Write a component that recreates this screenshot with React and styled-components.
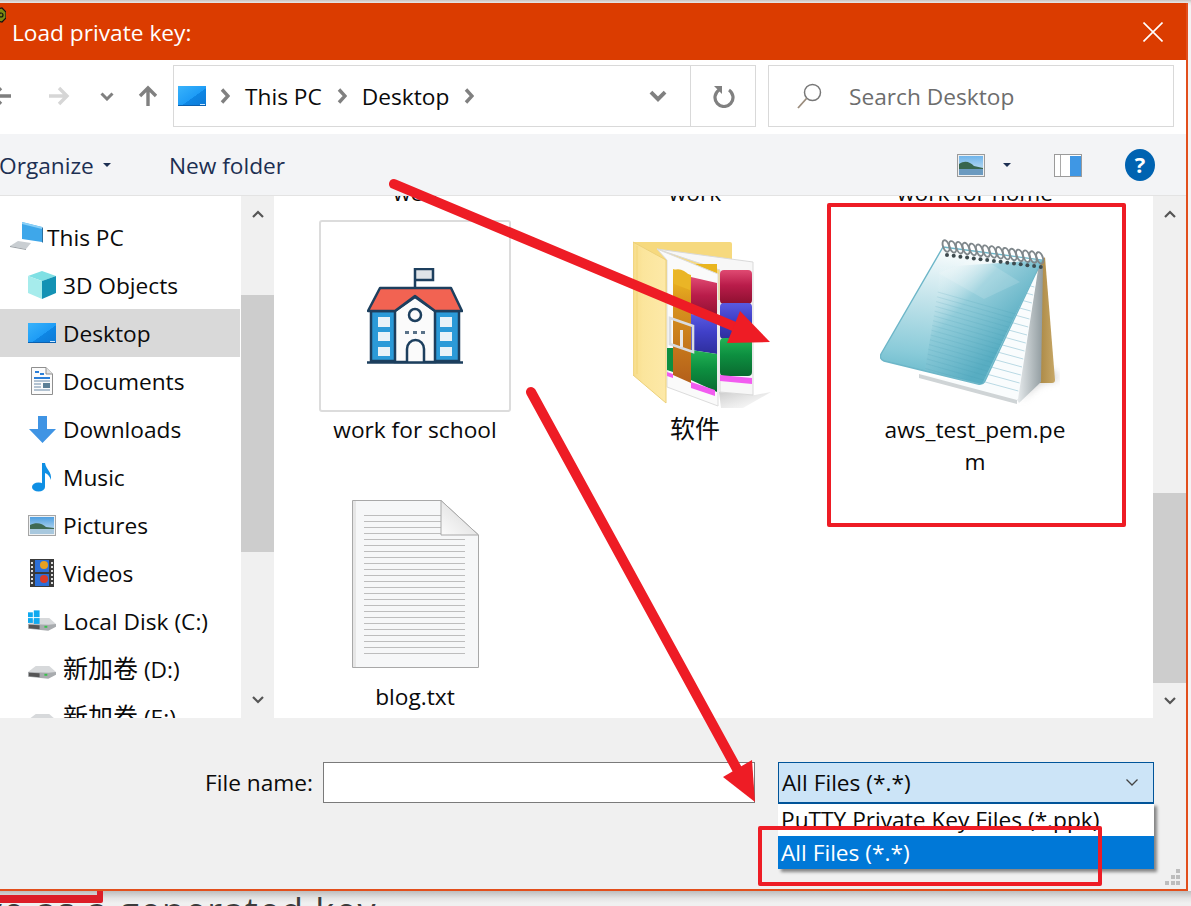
import React from "react";
import styled, { createGlobalStyle } from "styled-components";

const UI_FONT = `"Open Sans", "Noto Sans", "Noto Sans CJK SC", sans-serif`;

const GlobalStyle = createGlobalStyle`
  html, body { margin: 0; padding: 0; background: #f3f3f3; }
  * { box-sizing: border-box; }
`;

const Page = styled.div`
  position: relative;
  width: 1191px;
  height: 906px;
  overflow: hidden;
  font-family: ${UI_FONT};
  font-size: 22.7px;
  color: #0a0a0a;
  background: linear-gradient(#c9c5c2 0, #e9e7e5 3px, #f4f4f4 6px);
`;

const Window = styled.div`
  width: 1188px;
  height: 888px;
  margin-top: 3px;
  display: flex;
  flex-direction: column;
  border-right: 2px solid #e24f1c;
  border-bottom: 2px solid #e24f1c;
  background: #fff;
  position: relative;
  z-index: 1;
`;

const TitleBar = styled.div`
  height: 57px;
  flex: none;
  background: #db3c00;
  color: #fff;
  display: flex;
  align-items: center;
  padding: 1px 23px 0 0;
`;

const TitleText = styled.span`
  margin-left: 6px;
  flex: 1;
`;

const NavBar = styled.div`
  height: 74px;
  flex: none;
  display: flex;
  align-items: center;
  padding-bottom: 2px;
`;

const NavSlot = styled.div`
  flex: none;
  width: ${(p) => p.$w}px;
  margin-left: ${(p) => p.$ml || 0}px;
  display: flex;
  align-items: center;
  justify-content: center;
`;

const AddressBox = styled.div`
  margin-left: 13px;
  width: 583px;
  height: 62px;
  flex: none;
  display: flex;
  align-items: center;
  border: 1px solid #d9d9d9;
  padding-left: 4px;
`;

const Crumb = styled.span`
  margin: 0 15px;
  white-space: nowrap;
`;

const AddressEnd = styled.div`
  margin-left: auto;
  width: 65px;
  height: 100%;
  flex: none;
  display: flex;
  align-items: center;
  justify-content: center;
  border-left: 1px solid #d9d9d9;
`;

const SearchBox = styled.div`
  margin-left: 12px;
  width: 406px;
  height: 62px;
  flex: none;
  display: flex;
  align-items: center;
  border: 1px solid #d9d9d9;
  padding-left: 28px;
  color: #6d6d6d;
`;

const SearchText = styled.span`
  margin-left: 27px;
`;

const CommandBar = styled.div`
  height: 62px;
  flex: none;
  display: flex;
  align-items: center;
  padding-top: 1px;
  background: #f3f4f6;
  border-bottom: 1px solid #e3e3e3;
  color: #1c2f52;
`;

const CommandLabel = styled.span`
  margin-left: ${(p) => p.$ml || 0}px;
  white-space: nowrap;
`;

const Caret = styled.span`
  flex: none;
  width: 0;
  height: 0;
  margin-left: ${(p) => p.$ml}px;
  border-left: 4px solid transparent;
  border-right: 4px solid transparent;
  border-top: 4px solid #1c2f52;
`;

const CommandIcon = styled.div`
  flex: none;
  display: flex;
  margin-left: ${(p) => p.$ml}px;
`;

const Main = styled.div`
  flex: 1;
  min-height: 0;
  display: flex;
`;

const Sidebar = styled.div`
  width: 241px;
  flex: none;
  overflow: hidden;
  padding-top: 17px;
`;

const TreeRow = styled.div`
  height: 48px;
  width: 240px;
  display: flex;
  align-items: center;
  white-space: nowrap;
  padding-left: ${(p) => p.$indent}px;
  background: ${(p) => (p.$selected ? "#d9d9d9" : "transparent")};
`;

const TreeIcon = styled.span`
  flex: none;
  width: ${(p) => p.$w || 28}px;
  height: 32px;
  margin-right: ${(p) => p.$mr || 7}px;
  display: flex;
  align-items: center;
  justify-content: center;
`;

const Cjk = styled.span`
  font-family: "Noto Sans CJK SC", sans-serif;
  font-size: 25px;
  line-height: 1;
`;

const Scrollbar = styled.div`
  width: 33px;
  flex: none;
  display: flex;
  flex-direction: column;
  background: #f0f0f0;
`;

const ScrollArrow = styled.div`
  height: 36px;
  flex: none;
  display: flex;
  align-items: center;
  justify-content: center;
`;

const ScrollTrack = styled.div`
  flex: 1;
  padding-top: ${(p) => p.$top}px;
`;

const ScrollThumb = styled.div`
  height: ${(p) => p.$h}px;
  background: #cdcdcd;
`;

const FilePane = styled.div`
  flex: 1;
  min-width: 0;
  margin-left: 1px;
  overflow: hidden;
`;

const FileGrid = styled.div`
  display: grid;
  grid-template-columns: repeat(3, 280px);
  grid-template-rows: 24px 267px auto;
`;

const ClippedLabel = styled.div`
  height: 32px;
  margin-top: -19px;
  line-height: 32px;
  text-align: center;
`;

const FileItem = styled.div`
  display: flex;
  flex-direction: column;
  align-items: center;
`;

const Thumb = styled.div`
  width: 192px;
  height: 192px;
  flex: none;
  display: flex;
  align-items: center;
  justify-content: center;
  padding: ${(p) => p.$pad || 0};
  border: ${(p) => (p.$framed ? "2px solid #dcdcdc" : "none")};
  border-radius: 3px;
`;

const FileLabel = styled.div`
  width: 190px;
  margin-top: 2px;
  line-height: 32px;
  text-align: center;
  overflow-wrap: anywhere;
`;

const Footer = styled.div`
  height: 171px;
  flex: none;
  position: relative;
  background: #f0f0f0;
  display: flex;
  align-items: flex-start;
  padding: 44px 0 0 205px;
`;

const FieldLabel = styled.span`
  width: 118px;
  height: 41px;
  flex: none;
  line-height: 41px;
  white-space: nowrap;
`;

const NameInput = styled.div`
  width: 432px;
  height: 41px;
  flex: none;
  background: #fff;
  border: 1px solid #7a7a7a;
`;

const TypeSelect = styled.div`
  position: relative;
  margin-left: 23px;
  width: 376px;
  height: 41px;
  flex: none;
  display: flex;
  align-items: center;
  justify-content: space-between;
  padding: 0 14px 0 3px;
  background: #cce4f7;
  border: 1px solid #005499;
`;

const TypeMenu = styled.div`
  position: absolute;
  top: 40px;
  left: -1px;
  width: 376px;
  background: #fff;
  border-top: 1px solid #005499;
  box-shadow: 3px 3px 3px rgba(0, 0, 0, 0.45);
`;

const TypeOption = styled.div`
  height: ${(p) => p.$h}px;
  padding-left: 3px;
  line-height: ${(p) => p.$h}px;
  white-space: nowrap;
  color: ${(p) => (p.$active ? "#fff" : "#0a0a0a")};
  background: ${(p) => (p.$active ? "#0078d7" : "#fff")};
`;

const Grip = styled.svg`
  position: absolute;
  right: 5px;
  bottom: 4px;
`;

const Backdrop = styled.div`
  position: relative;
  height: 15px;
  overflow: hidden;
  background: linear-gradient(#bdbdbd 0, #e3e3e3 7px, #f0f0f0 12px);
`;

const BackdropText = styled.div`
  position: absolute;
  right: 814px;
  top: 0;
  font-size: 36px;
  line-height: 40px;
  letter-spacing: 1.5px;
  color: #3c3c3c;
  white-space: nowrap;
`;

const RedMark = styled.div`
  position: absolute;
  left: -10px;
  top: -2px;
  width: 113px;
  height: 14px;
  border-right: 6px solid #dc1d27;
  border-bottom: 8px solid #dc1d27;
  border-radius: 2px;
`;

const Overlay = styled.svg`
  position: absolute;
  left: 0;
  top: 0;
  z-index: 2;
  pointer-events: none;
`;

const Chevron = ({ color = "#808080", w = 10, h = 16 }) => (
  <svg width={w} height={h} viewBox="0 0 10 16">
    <path d="M2 1.5 L8 8 L2 14.5" fill="none" stroke={color} strokeWidth="3.4" />
  </svg>
);

const ChevronDown = ({ color = "#808080", w = 14, h = 9, sw = 3 }) => (
  <svg width={w} height={h} viewBox="0 0 14 9">
    <path d="M1.5 1.5 L7 7 L12.5 1.5" fill="none" stroke={color} strokeWidth={sw} />
  </svg>
);

const ScrollChevron = ({ up }) => (
  <svg width="12" height="8" viewBox="0 0 12 8">
    <path d={up ? "M1 7 L6 2 L11 7" : "M1 1 L6 6 L11 1"} fill="none" stroke="#555" strokeWidth="2.2" />
  </svg>
);

const PuttyIcon = () => (
  <svg width="6" height="16" viewBox="0 0 6 16" style={{ flex: "none", marginTop: -34 }}>
    <path d="M-3 2 L2 1 L6 5 L6 11 L2 15 L-3 14 Z" fill="#7c8a12" stroke="#111" strokeWidth="1.2" />
    <circle cx="1" cy="8" r="2" fill="none" stroke="#111" strokeWidth="1.2" />
  </svg>
);

const ArrowIcon = ({ color, size = 22, flip, up }) => (
  <svg
    width={size}
    height={size}
    viewBox="0 0 22 22"
    style={{ transform: up ? "rotate(-90deg)" : flip ? "scaleX(-1)" : "none" }}
  >
    <path d="M1 11 H19 M11 3 L19 11 L11 19" fill="none" stroke={color} strokeWidth="3.4" />
  </svg>
);

const DesktopIcon = ({ w = 28, h = 20 }) => (
  <svg width={w} height={h} viewBox="0 0 28 20">
    <defs>
      <linearGradient id="desk" x1="0" y1="0" x2="1" y2="1">
        <stop offset="0" stopColor="#39b3fb" />
        <stop offset="0.55" stopColor="#1e9cf6" />
        <stop offset="0.56" stopColor="#0e86e4" />
        <stop offset="1" stopColor="#0d7ad6" />
      </linearGradient>
    </defs>
    <rect x="0" y="0" width="28" height="20" fill="url(#desk)" />
    <rect x="0" y="19" width="28" height="1" fill="#0b5fae" />
    <rect x="22" y="18" width="5" height="1" fill="#cfeaff" />
  </svg>
);

const RefreshIcon = () => (
  <svg width="24" height="24" viewBox="0 0 24 24">
    <path d="M8 6 A9 9 0 1 0 18 6" fill="none" stroke="#808080" strokeWidth="3.2" />
    <path d="M3 2 H11 V10 Z" fill="#808080" />
  </svg>
);

const SearchIcon = () => (
  <svg width="25" height="26" viewBox="0 0 25 26">
    <circle cx="15.5" cy="9.5" r="8" fill="none" stroke="#777" strokeWidth="1.5" />
    <path d="M9.5 15.5 L1 25" stroke="#9a8c7c" strokeWidth="1.8" />
  </svg>
);

const ViewIcon = () => (
  <svg width="28" height="23" viewBox="0 0 28 23">
    <defs>
      <linearGradient id="viewSky" x1="0" y1="0" x2="0" y2="1">
        <stop offset="0" stopColor="#6fb4ea" />
        <stop offset="1" stopColor="#d5e8f4" />
      </linearGradient>
    </defs>
    <rect x="0.5" y="0.5" width="27" height="22" fill="#eef0f2" stroke="#9a9a9a" />
    <rect x="2" y="2" width="24" height="19" fill="url(#viewSky)" />
    <path d="M2 10 C8 6 13 8 17 12 L26 14 V15 H2 Z" fill="#38664e" />
    <rect x="2" y="15" width="24" height="6" fill="#6b9ac0" />
  </svg>
);

const PreviewIcon = () => (
  <svg width="28" height="23" viewBox="0 0 28 23">
    <rect x="0.5" y="0.5" width="27" height="22" fill="#fff" stroke="#9a9a9a" />
    <rect x="6" y="1" width="1" height="21" fill="#a8a8a8" />
    <rect x="16" y="2" width="11" height="20" fill="#3f97e4" />
  </svg>
);

const HelpIcon = () => (
  <svg width="30" height="32" viewBox="0 0 30 32">
    <ellipse cx="15" cy="16" rx="15" ry="16" fill="#0063b1" />
    <text x="15" y="24" textAnchor="middle" fill="#fff" fontSize="22" fontWeight="700" fontFamily="Open Sans">?</text>
  </svg>
);

const ThisPcIcon = () => (
  <svg width="34" height="30" viewBox="0 0 34 30">
    <path d="M12 0 L32 5 V20 L12 17 Z" fill="#3ea7ea" />
    <path d="M12 0 L32 5 L32 7 L12 2 Z" fill="#8bd0f7" />
    <path d="M32 5 L33 6 V21 L32 20 Z" fill="#2c6f9e" />
    <path d="M8 19 L21 21 L16 27 L0 24 Z" fill="#c9ced2" />
    <path d="M0 24 L16 27 V28 L0 25 Z" fill="#9aa0a5" />
  </svg>
);

const CubeIcon = () => (
  <svg width="28" height="28" viewBox="0 0 28 28">
    <path d="M14 0 L28 5 L14 10 L0 5 Z" fill="#7fe0e4" />
    <path d="M0 5 L14 10 V28 L0 22 Z" fill="#a6ecec" />
    <path d="M28 5 L14 10 V28 L28 22 Z" fill="#1492b4" />
  </svg>
);

const DocumentsIcon = () => (
  <svg width="22" height="28" viewBox="0 0 22 28">
    <path d="M0.5 0.5 H15 L21.5 7 V27.5 H0.5 Z" fill="#fbfbfb" stroke="#8f8f8f" />
    <path d="M15 0.5 V7 H21.5" fill="#e3e3e3" stroke="#8f8f8f" />
    <path d="M4 5 H8 M9 7 H13 M3 11 H19" stroke="#2b7fd8" strokeWidth="2" />
    <path d="M3 14 H19 M3 17 H10 M3 20 H10 M3 23 H19" stroke="#6b8aa8" strokeWidth="1" />
    <rect x="12" y="16" width="7" height="5" fill="#5c7f96" />
  </svg>
);

const DownloadsIcon = () => (
  <svg width="27" height="27" viewBox="0 0 27 27">
    <path d="M9 0 H18 V13 H27 L13.5 27 L0 13 H9 Z" fill="#3f94e4" />
  </svg>
);

const MusicIcon = () => (
  <svg width="20" height="29" viewBox="0 0 20 29">
    <ellipse cx="6.5" cy="24" rx="6.5" ry="4.6" fill="#0f8fe4" />
    <path d="M10 0 H13 C14 7 20 8 19 17 C18 14 16 11 13 10 V24 H10 Z" fill="#0f8fe4" />
  </svg>
);

const PicturesIcon = () => (
  <svg width="28" height="21" viewBox="0 0 28 21">
    <defs>
      <linearGradient id="picSky" x1="0" y1="0" x2="0" y2="1">
        <stop offset="0" stopColor="#4f9fe0" />
        <stop offset="1" stopColor="#d5e8f4" />
      </linearGradient>
    </defs>
    <rect x="0.5" y="0.5" width="27" height="20" fill="#eef1f3" stroke="#a5a5a5" />
    <rect x="2" y="2" width="24" height="17" fill="url(#picSky)" />
    <path d="M2 10 C8 7 14 8 18 12 L26 13 V15 H2 Z" fill="#3f6a54" />
    <rect x="2" y="14" width="24" height="5" fill="#a8c8de" />
  </svg>
);

const VideosIcon = () => (
  <svg width="24" height="28" viewBox="0 0 24 28">
    <rect x="0" y="0" width="24" height="28" fill="#3a3a3a" />
    <rect x="5" y="1" width="14" height="12" fill="#2c6fd8" />
    <rect x="5" y="15" width="14" height="12" fill="#2c6fd8" />
    <circle cx="14" cy="6" r="4" fill="#e8a020" />
    <circle cx="14" cy="20" r="4" fill="#d93a2a" />
    <path d="M2 3 V26" stroke="#ddd" strokeWidth="2" strokeDasharray="2 2" />
    <path d="M22 3 V26" stroke="#ddd" strokeWidth="2" strokeDasharray="2 2" />
  </svg>
);

const DriveIcon = ({ windows }) => (
  <svg width="29" height="22" viewBox="0 0 29 22">
    <path d="M0 14 L8 8 H22 L29 14 L21 18 H3 Z" fill="#d7d9db" />
    <path d="M0 14 L21 15 L29 14 V17 L21 21 L0 19 Z" fill="#a8abae" />
    <path d="M1 15 L12 15.5 V19.5 L1 18.5 Z" fill="#555" />
    <rect x="17" y="16" width="3" height="2" fill="#37c24a" />
    {windows && (
      <g fill="#10a9ef">
        <rect x="0" y="2" width="5" height="5" />
        <rect x="6" y="0" width="6" height="7" />
        <rect x="0" y="8" width="5" height="5" />
        <rect x="6" y="8" width="6" height="6" />
      </g>
    )}
  </svg>
);

const SchoolIcon = () => (
  <svg width="96" height="96" viewBox="0 0 96 96" fill="none">
    <path d="M48 20 V1 H66 V12 H48" fill="#e0e4e8" stroke="#1d3f5e" strokeWidth="2.5" />
    <rect x="4" y="43" width="88" height="50" fill="#2b9ad8" stroke="#1d3f5e" strokeWidth="2.5" />
    <path d="M28 94 V43 L48 29 L68 43 V94 Z" fill="#fbfbfb" stroke="#1d3f5e" strokeWidth="2.5" />
    <path d="M13 20 H84 L95 43 H68 L48 28 L28 43 H1 Z" fill="#f26352" stroke="#1d3f5e" strokeWidth="2.5" strokeLinejoin="round" />
    <circle cx="48" cy="47" r="6" fill="#fbfbfb" stroke="#1d3f5e" strokeWidth="2.5" />
    <g fill="#5a7288">
      <rect x="38" y="63" width="4" height="3" />
      <rect x="46" y="63" width="4" height="3" />
      <rect x="54" y="63" width="4" height="3" />
    </g>
    <path d="M40 94 V81 A8.5 9 0 0 1 57 81 V94" fill="#fbfbfb" stroke="#1d3f5e" strokeWidth="2.5" />
    <g fill="#e8f2f8">
      <rect x="11" y="49" width="12" height="10" />
      <rect x="11" y="64" width="12" height="9" />
      <rect x="11" y="79" width="12" height="9" />
      <rect x="73" y="49" width="12" height="10" />
      <rect x="73" y="64" width="12" height="9" />
      <rect x="73" y="79" width="12" height="9" />
    </g>
    <path d="M0 94.5 H96" stroke="#1d3f5e" strokeWidth="2.5" />
  </svg>
);

const rollGradient = (id, light, mid, dark) => (
  <linearGradient id={id} x1="0" y1="0" x2="0" y2="1">
    <stop offset="0" stopColor={light} />
    <stop offset="0.45" stopColor={mid} />
    <stop offset="1" stopColor={dark} />
  </linearGradient>
);

const RarFolderIcon = () => (
  <svg width="140" height="170" viewBox="0 0 140 170">
    <defs>
      <linearGradient id="flap" x1="0" y1="0" x2="1" y2="0">
        <stop offset="0" stopColor="#f7dc8a" />
        <stop offset="0.3" stopColor="#fbe59c" />
        <stop offset="1" stopColor="#fde9a8" />
      </linearGradient>
      <linearGradient id="shade" x1="0" y1="0" x2="1" y2="1">
        <stop offset="0" stopColor="#9a9a9a" stopOpacity="0.5" />
        <stop offset="1" stopColor="#bbb" stopOpacity="0" />
      </linearGradient>
      <linearGradient id="belt" x1="0" y1="0" x2="0" y2="1">
        <stop offset="0" stopColor="#f0c020" />
        <stop offset="0.3" stopColor="#d9941e" />
        <stop offset="1" stopColor="#b45f1a" />
      </linearGradient>
      {rollGradient("rollRed", "#e04a72", "#b91c4a", "#8e1030")}
      {rollGradient("rollBlue", "#5a5ae0", "#4040c8", "#2e2e9c")}
      {rollGradient("rollGreen", "#22b355", "#0d8f40", "#0a6a30")}
    </defs>
    <path d="M86 152 L122 155 L138 152 L110 168 L88 168 Z" fill="url(#shade)" />
    <path d="M0 2 H97 Q99 2 99 4 V60 H0 Z" fill="#f6d97e" />
    <path d="M24 9 L120 22 V155 L87 152 V30 Z" fill="#f7f7f7" stroke="#d9d9d9" />
    <rect x="87" y="30" width="32" height="34" rx="4" fill="url(#rollRed)" />
    <rect x="87" y="63" width="32" height="36" rx="4" fill="url(#rollBlue)" />
    <rect x="87" y="98" width="32" height="38" rx="4" fill="url(#rollGreen)" />
    <rect x="60" y="24" width="24" height="9" fill="#e9b51f" />
    <path d="M87 135 L119 138 V144 L87 141 Z" fill="#f25cf0" />
    <path d="M24 9 L85 34 V166 L34 147 V20 Z" fill="#fafafa" stroke="#dcdcdc" />
    <path d="M58 37 L84 43 V78 L58 74 Z" fill="url(#rollRed)" />
    <path d="M58 74 L84 78 V114 L58 110 Z" fill="url(#rollBlue)" />
    <path d="M58 110 L84 114 V152 L58 140 Z" fill="url(#rollGreen)" />
    <path d="M34 108 L40 108 V132 L34 130 Z" fill="#0d8f40" />
    <path d="M40 29 L58 35 V143 L40 135 Z" fill="url(#belt)" />
    <path d="M41 30 Q49 27 57 36 V50 L41 44 Z" fill="#eab526" />
    <path d="M37 78 L60 86 V112 L37 104 Z" fill="none" stroke="#d9dce0" strokeWidth="2.6" />
    <rect x="47" y="90" width="3" height="17" fill="#e8e8e8" />
    <path d="M34 132 L40 134 V138 L34 136 Z" fill="#f25cf0" />
    <path d="M58 142 L82 150 V156 L58 148 Z" fill="#f25cf0" />
    <path d="M0 2 L33 20 V163 L0 135 Z" fill="url(#flap)" stroke="#ecd07a" strokeWidth="1" />
    <path d="M4 6 V134" stroke="#f3d67a" strokeWidth="1" />
  </svg>
);

const spiralRings = Array.from({ length: 15 }, (_, i) => i);
const coverLines = Array.from({ length: 22 }, (_, i) => i);
const pageLines = Array.from({ length: 14 }, (_, i) => i);

const NotepadIcon = () => (
  <svg width="180" height="172" viewBox="0 0 180 172">
    <defs>
      <linearGradient id="coverBase" x1="0.55" y1="0" x2="0.4" y2="1">
        <stop offset="0" stopColor="#ffffff" />
        <stop offset="0.4" stopColor="#c4e4eb" />
        <stop offset="0.8" stopColor="#8acbd9" />
        <stop offset="1" stopColor="#66b8ca" />
      </linearGradient>
      <linearGradient id="coverPanel" x1="0.1" y1="0.05" x2="0.7" y2="0.65">
        <stop offset="0" stopColor="#ffffff" stopOpacity="0" />
        <stop offset="0.45" stopColor="#8ccad8" stopOpacity="0.85" />
        <stop offset="1" stopColor="#58adc2" />
      </linearGradient>
      <linearGradient id="spine" x1="0" y1="0" x2="1" y2="0">
        <stop offset="0" stopColor="#a5823e" />
        <stop offset="1" stopColor="#c7a766" />
      </linearGradient>
      <linearGradient id="stack" x1="0" y1="0" x2="1" y2="0">
        <stop offset="0" stopColor="#e8ecee" />
        <stop offset="1" stopColor="#8f9a9e" />
      </linearGradient>
      <filter id="soft" x="-30%" y="-30%" width="160%" height="160%">
        <feGaussianBlur stdDeviation="4" />
      </filter>
      <clipPath id="panelClip">
        <path d="M60 30 L58 53 L45 133 L102 147 L162 23 Z" />
      </clipPath>
    </defs>
    <path d="M140 163 L160 146 L180 142 L172 134 L160 130 Z" fill="#9a9a9a" opacity="0.55" filter="url(#soft)" />
    <path d="M165 20 L175 143 Q175 146 172 146 L160 146 L156 30 Z" fill="url(#spine)" />
    <path d="M158 30 L163 28 L161 145 L139 166 L137 163 Z" fill="url(#stack)" />
    <path d="M39 137 L100 148 L158 33 L138 162 L130 165 Z" fill="#f9fcfd" />
    <path d="M39 137 L137 163 L137 167 L39 141 Z" fill="#cfd4d6" />
    {pageLines.map((i) => {
      const yr = 50 + i * 8;
      const xr = 157 - (yr - 33) * 0.154;
      return (
        <path key={i} d={`M${xr} ${yr} L${xr - 70} ${yr - 19}`} stroke="#b9d9e4" strokeWidth="1" />
      );
    })}
    <path
      d="M63 10 L162 23 L105 144 Q103 148 98 147 L4 124 Q-1 122 1 117 Z"
      fill="url(#coverBase)"
      stroke="#6db6c8"
      strokeWidth="1.4"
    />
    <path d="M60 30 L58 53 L45 133 L102 147 L162 23 Z" fill="url(#coverPanel)" />
    <path d="M58 36 L104 62 L140 45 L100 20 Z" fill="#fff" opacity="0.14" />
    <g clipPath="url(#panelClip)">
      {coverLines.map((i) => (
        <path
          key={i}
          d={`M40 ${50 + i * 5} L160 ${84 + i * 5}`}
          stroke="#3f97ad"
          strokeWidth="0.7"
          opacity="0.22"
        />
      ))}
    </g>
    {spiralRings.map((i) => {
      const cx = 66 + i * 6.7;
      const cy = 9 + i * 0.85;
      return (
        <g key={i}>
          <circle cx={cx + 1} cy={cy + 9} r="2" fill="#3d4a4e" />
          <ellipse
            cx={cx}
            cy={cy}
            rx="3"
            ry="6"
            fill="none"
            stroke="#7f878b"
            strokeWidth="1.9"
            transform={`rotate(-20 ${cx} ${cy})`}
          />
        </g>
      );
    })}
  </svg>
);

const docLines = Array.from({ length: 24 }, (_, i) => i);

const TextFileIcon = () => (
  <svg width="127" height="169" viewBox="0 0 127 169">
    <defs>
      <linearGradient id="fold" x1="0" y1="1" x2="1" y2="0">
        <stop offset="0" stopColor="#fbfbfb" />
        <stop offset="1" stopColor="#d4d4d4" />
      </linearGradient>
    </defs>
    <path d="M0.5 0.5 H89 L126.5 35 V167.5 H0.5 Z" fill="#f6f7f8" stroke="#a8a8a8" />
    <rect x="1" y="1" width="3" height="166" fill="#e6e6e6" />
    {docLines.map((i) => (
      <rect key={i} x="12" y={15 + i * 6} width={i < 4 ? 77 : 101} height="1" fill="#bdbdbd" />
    ))}
    <path d="M89 0.5 L126.5 35 H89 Z" fill="url(#fold)" stroke="#a8a8a8" />
  </svg>
);

const treeItems = [
  { name: "This PC", indent: 10, icon: <ThisPcIcon />, w: 34, mr: 3 },
  { name: "3D Objects", indent: 28, icon: <CubeIcon /> },
  { name: "Desktop", indent: 28, icon: <DesktopIcon />, selected: true },
  { name: "Documents", indent: 28, icon: <DocumentsIcon /> },
  { name: "Downloads", indent: 28, icon: <DownloadsIcon /> },
  { name: "Music", indent: 28, icon: <MusicIcon /> },
  { name: "Pictures", indent: 28, icon: <PicturesIcon /> },
  { name: "Videos", indent: 28, icon: <VideosIcon /> },
  { name: "Local Disk (C:)", indent: 28, icon: <DriveIcon windows /> },
  { name: "新加卷", suffix: " (D:)", indent: 28, icon: <DriveIcon /> },
  { name: "新加卷", suffix: " (E:)", indent: 28, icon: <DriveIcon /> },
];

export default function App() {
  return (
    <Page>
      <GlobalStyle />
      <Window>
        <TitleBar>
          <PuttyIcon />
          <TitleText>Load private key:</TitleText>
          <svg width="20" height="20" viewBox="0 0 20 20">
            <path d="M0.5 0.5 L19.5 19.5 M19.5 0.5 L0.5 19.5" stroke="#fff" strokeWidth="1.6" />
          </svg>
        </TitleBar>

        <NavBar>
          <NavSlot $w={22} $ml={-10}>
            <ArrowIcon color="#7e7e7e" flip />
          </NavSlot>
          <NavSlot $w={24} $ml={35}>
            <ArrowIcon color="#d6d6d6" />
          </NavSlot>
          <NavSlot $w={14} $ml={29}>
            <ChevronDown />
          </NavSlot>
          <NavSlot $w={24} $ml={22}>
            <ArrowIcon color="#808080" up />
          </NavSlot>
          <AddressBox>
            <DesktopIcon />
            <NavSlot $w={10} $ml={14}>
              <Chevron />
            </NavSlot>
            <Crumb>This PC</Crumb>
            <Chevron />
            <Crumb>Desktop</Crumb>
            <Chevron />
            <NavSlot $w={18} $ml={175}>
              <ChevronDown w={18} h={12} />
            </NavSlot>
            <AddressEnd>
              <RefreshIcon />
            </AddressEnd>
          </AddressBox>
          <SearchBox>
            <SearchIcon />
            <SearchText>Search Desktop</SearchText>
          </SearchBox>
        </NavBar>

        <CommandBar>
          <CommandLabel $ml={-1}>Organize</CommandLabel>
          <Caret $ml={9} />
          <CommandLabel $ml={58}>New folder</CommandLabel>
          <CommandIcon $ml={672}>
            <ViewIcon />
          </CommandIcon>
          <Caret $ml={18} />
          <CommandIcon $ml={43}>
            <PreviewIcon />
          </CommandIcon>
          <CommandIcon $ml={43}>
            <HelpIcon />
          </CommandIcon>
        </CommandBar>

        <Main>
          <Sidebar>
            {treeItems.map((item) => (
              <TreeRow key={item.name + item.suffix} $indent={item.indent} $selected={item.selected}>
                <TreeIcon $w={item.w} $mr={item.mr}>
                  {item.icon}
                </TreeIcon>
                <span>
                  {item.suffix ? <Cjk>{item.name}</Cjk> : item.name}
                  {item.suffix}
                </span>
              </TreeRow>
            ))}
          </Sidebar>
          <Scrollbar>
            <ScrollArrow>
              <ScrollChevron up />
            </ScrollArrow>
            <ScrollTrack $top={63}>
              <ScrollThumb $h={257} />
            </ScrollTrack>
            <ScrollArrow>
              <ScrollChevron />
            </ScrollArrow>
          </Scrollbar>
          <FilePane>
            <FileGrid>
              <ClippedLabel>web</ClippedLabel>
              <ClippedLabel>work</ClippedLabel>
              <ClippedLabel>work for home</ClippedLabel>
              <FileItem>
                <Thumb $framed>
                  <SchoolIcon />
                </Thumb>
                <FileLabel>work for school</FileLabel>
              </FileItem>
              <FileItem>
                <Thumb $pad="17px 0 0 16px">
                  <RarFolderIcon />
                </Thumb>
                <FileLabel>
                  <Cjk>软件</Cjk>
                </FileLabel>
              </FileItem>
              <FileItem>
                <Thumb $pad="14px 10px 0 0">
                  <NotepadIcon />
                </Thumb>
                <FileLabel>aws_test_pem.pem</FileLabel>
              </FileItem>
              <FileItem>
                <Thumb $pad="2px 0 0 0">
                  <TextFileIcon />
                </Thumb>
                <FileLabel>blog.txt</FileLabel>
              </FileItem>
            </FileGrid>
          </FilePane>
          <Scrollbar>
            <ScrollArrow>
              <ScrollChevron up />
            </ScrollArrow>
            <ScrollTrack $top={261}>
              <ScrollThumb $h={190} />
            </ScrollTrack>
            <ScrollArrow>
              <ScrollChevron />
            </ScrollArrow>
          </Scrollbar>
        </Main>

        <Footer>
          <FieldLabel>File name:</FieldLabel>
          <NameInput />
          <TypeSelect>
            <span>All Files (*.*)</span>
            <ChevronDown color="#444" w={14} h={9} sw={1.3} />
            <TypeMenu>
              <TypeOption $h={32}>PuTTY Private Key Files (*.ppk)</TypeOption>
              <TypeOption $h={33} $active>
                All Files (*.*)
              </TypeOption>
            </TypeMenu>
          </TypeSelect>
          <Grip width="16" height="16" viewBox="0 0 16 16" fill="#bdbdbd">
            <rect x="11" y="0" width="4" height="4" />
            <rect x="6" y="6" width="4" height="4" />
            <rect x="11" y="6" width="4" height="4" />
            <rect x="0" y="12" width="4" height="4" />
            <rect x="6" y="12" width="4" height="4" />
            <rect x="11" y="12" width="4" height="4" />
          </Grip>
        </Footer>
      </Window>

      <Backdrop>
        <BackdropText>save as a generated key</BackdropText>
        <RedMark />
      </Backdrop>

      <Overlay width="1191" height="906" viewBox="0 0 1191 906">
        <g fill="none" stroke="#ee1c25" strokeLinecap="round">
          <path d="M394 184 L745 331" strokeWidth="10" />
          <path d="M531 392 L743 780" strokeWidth="10" />
        </g>
        <polygon points="770,342 740,311 727,343" fill="#ee1c25" />
        <polygon points="755,802 752,760 723,777" fill="#ee1c25" />
        <g fill="none" stroke="#ee1c25" strokeWidth="4" strokeLinejoin="round">
          <rect x="829" y="205" width="295" height="320" />
          <rect x="760" y="828" width="340" height="56" />
        </g>
      </Overlay>
    </Page>
  );
}
